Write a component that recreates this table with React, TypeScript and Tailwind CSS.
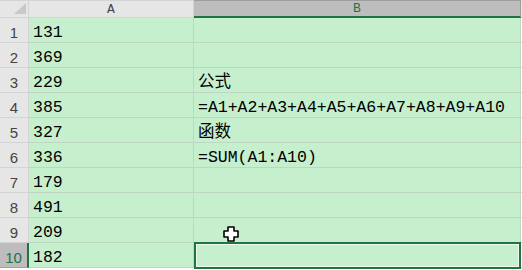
import { Fragment } from 'react';

const colA = ['131', '369', '229', '385', '327', '336', '179', '491', '209', '182'];
const colB = ['', '', '公式', '=A1+A2+A3+A4+A5+A6+A7+A8+A9+A10', '函数', '=SUM(A1:A10)', '', '', '', ''];

const cellFont = {
  fontFamily: '"Liberation Mono", "Noto Sans CJK SC", monospace',
};

// White plus cursor with a heavy black outline
function CellCursor() {
  return (
    <svg className="absolute left-[223px] top-[226px]" width="16" height="16" viewBox="0 0 16 16">
      <path
        d="M5 1h6v4h4v6h-4v4H5v-4H1V5h4z"
        fill="#fff"
        stroke="#000"
        strokeWidth="1.6"
        strokeLinejoin="round"
      />
    </svg>
  );
}

export default function App() {
  return (
    <div className="relative h-[270px] w-[522px] overflow-hidden bg-white">
      <div className="grid grid-cols-[29px_165px_327px_1fr] grid-rows-[18px_repeat(10,25px)]">
        {/* header row */}
        <div className="relative border-t border-r border-b border-[#d4d4d4] bg-[#e6e6e6]">
          <svg className="absolute right-[2px] bottom-[3px]" width="12" height="11" viewBox="0 0 12 11">
            <path d="M12 0V11H0z" fill="#c8c8c8" />
          </svg>
        </div>
        <div
          className="flex items-center justify-center border-t border-r border-b border-[#d4d4d4] bg-[#e6e6e6] text-[13px] leading-none text-[#444]"
          style={cellFont}
        >
          A
        </div>
        <div
          className="flex items-center justify-center border-t border-r border-[#9e9e9e] border-b-2 border-b-[#217346] bg-[#bdbdbd] text-[13px] leading-none text-[#217346]"
          style={cellFont}
        >
          B
        </div>
        <div className="border-t border-b border-[#d4d4d4] bg-[#e6e6e6]" />

        {colA.map((a, i) => {
          const last = i === colA.length - 1;
          return (
            <Fragment key={i}>
              <div
                className={
                  last
                    ? 'flex items-end justify-center border-b border-[#9e9e9e] border-r-2 border-r-[#217346] bg-[#bdbdbd] pb-[2px] font-["Liberation_Sans"] text-[15px] leading-none text-[#217346]'
                    : 'flex items-end justify-center border-r border-b border-[#d4d4d4] bg-[#e6e6e6] pb-[2px] font-["Liberation_Sans"] text-[15px] leading-none text-[#444]'
                }
              >
                {i + 1}
              </div>
              <div
                className="flex items-end border-r border-b border-[#bfd6c2] bg-[#c6efce] pb-[1px] pl-[4px] text-[16.5px] leading-none text-black"
                style={cellFont}
              >
                {a}
              </div>
              <div
                className={
                  last
                    ? 'relative border-2 border-[#217346] bg-[#c6efce] outline outline-1 -outline-offset-[3px] outline-white/70 -mt-[1px] h-[27px]'
                    : 'flex items-end whitespace-nowrap border-r border-b border-[#bfd6c2] bg-[#c6efce] pb-[1px] pl-[4px] text-[16.5px] leading-none text-black'
                }
                style={last ? undefined : cellFont}
              >
                {last ? null : colB[i]}
              </div>
              <div className="border-b border-[#d4d4d4] bg-white" />
            </Fragment>
          );
        })}
      </div>
      <CellCursor />
    </div>
  );
}
